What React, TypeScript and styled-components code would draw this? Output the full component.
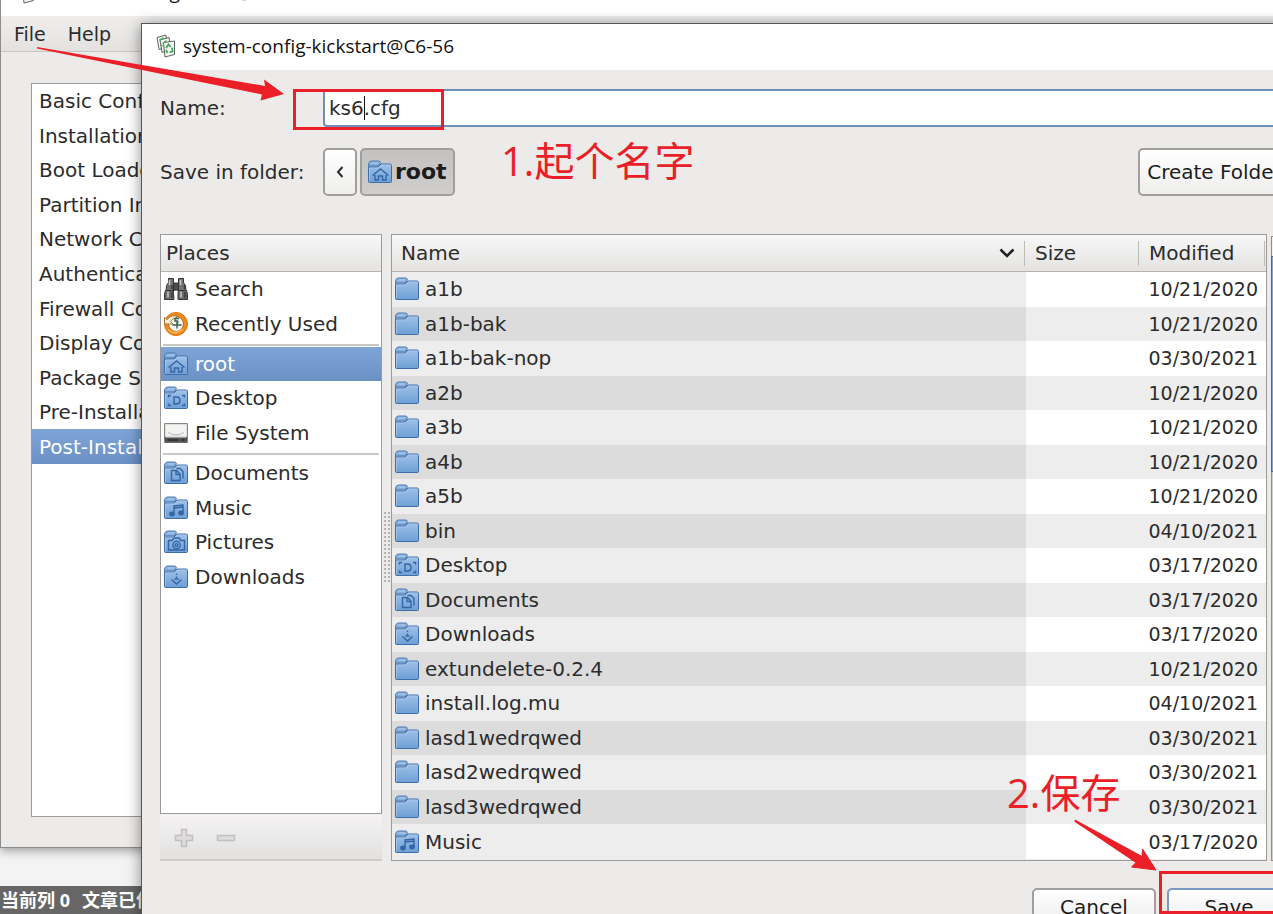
import React from "react";
import styled, { createGlobalStyle, css } from "styled-components";

const sans = `"DejaVu Sans", "Liberation Sans", sans-serif`;
const titleFont = `"Open Sans", "Noto Sans", sans-serif`;
const cjk = `"Noto Sans CJK SC", sans-serif`;
const red = "#ea1f27";
const line = "#9b9b99";
const blueRow = "linear-gradient(#7fa5d8, #6a90c4)";

const GlobalStyle = createGlobalStyle`
  *, *::before, *::after { box-sizing: border-box; }
  html, body { margin: 0; overflow: hidden; }
  body { font: 20px/24px ${sans}; color: #2c2c2c; background: #f3f3f3; }
  button, input { font: inherit; color: inherit; }
`;

const Desktop = styled.main`
  position: relative;
  display: flex;
  flex-direction: column;
  justify-content: flex-end;
  min-height: 100vh;
  overflow: hidden;
`;

const StatusBar = styled.footer`
  display: flex;
  gap: 12px;
  height: 28px;
  padding-left: 1px;
  background: #666;
  color: #fff;
  font: bold 18px/28px "Open Sans", ${cjk};
  white-space: nowrap;
`;

const AppWindow = styled.section<{ $x: number; $y: number }>`
  position: absolute;
  left: ${(p) => p.$x}px;
  top: ${(p) => p.$y}px;
  right: -37px;
  display: flex;
  flex-direction: column;
  background: #ecebea;
  border: 1px solid #8c8c8c;
`;

const MainWindow = styled(AppWindow)`
  box-shadow: 0 2px 10px rgba(0, 0, 0, 0.4);
`;

const Dialog = styled(AppWindow)`
  border-color: #555;
  box-shadow: 0 2px 14px rgba(0, 0, 0, 0.45);
`;

const TitleBar = styled.header`
  display: flex;
  align-items: center;
  gap: 7px;
  height: 46px;
  padding: 0 0 2px 14px;
  background: #fff;
  color: #111;
  font: 19px/24px ${titleFont};
  white-space: nowrap;
`;

const MenuBar = styled.nav`
  display: flex;
  gap: 22px;
  height: 36px;
  padding-left: 13px;
  background: linear-gradient(#efeeed, #e3e2e1);
  border-bottom: 1px solid #c6c5c4;
`;

const MenuButton = styled.button`
  padding: 0;
  border: 0;
  background: none;
  font-size: 19px;
`;

const MainBody = styled.div`
  padding: 31px 30px 30px;
`;

const SectionList = styled.div`
  height: 734px;
  border: 1px solid ${line};
  background: #fff;
`;

const ItemGroup = styled.ul<{ $height: number }>`
  display: grid;
  grid-auto-rows: 1fr;
  height: ${(p) => p.$height}px;
  margin: 0;
  padding: 0;
  list-style: none;
`;

const Item = styled.button<{ $selected?: boolean; $inset: number }>`
  display: flex;
  align-items: center;
  gap: 7px;
  width: 100%;
  height: 100%;
  padding: 0 0 0 ${(p) => p.$inset}px;
  border: 0;
  background: none;
  text-align: left;
  white-space: nowrap;
  ${(p) => p.$selected && css`
    background: ${blueRow};
    color: #fff;
  `}
`;

const Divider = styled.hr`
  height: 2px;
  margin: 3px 2px 1px;
  border: 0;
  background: #c8c8c8;
`;

const DialogBody = styled.form`
  display: flex;
  flex-direction: column;
  padding: 19px 18px;
`;

const FormRow = styled.div<{ $height: number; $after: number }>`
  display: flex;
  align-items: center;
  height: ${(p) => p.$height}px;
  margin-bottom: ${(p) => p.$after}px;
`;

const Caption = styled.label`
  flex: 0 0 163px;
  white-space: nowrap;
`;

const Field = styled.div`
  position: relative;
  flex: 1;
  height: 100%;
`;

const NameInput = styled.input`
  width: 100%;
  height: 100%;
  padding: 0 4px;
  border: 2px solid #6f8fb8;
  border-radius: 4px;
  background: #fff;
  outline: none;
`;

const Caret = styled.span`
  position: absolute;
  left: 41px;
  top: 7px;
  width: 1px;
  height: 24px;
  background: #111;
`;

const Button = styled.button<{ $pressed?: boolean; $focus?: boolean; $width?: number }>`
  display: flex;
  align-items: center;
  justify-content: center;
  gap: 3px;
  height: 48px;
  width: ${(p) => (p.$width ? `${p.$width}px` : "auto")};
  padding: 0 6px;
  border: 2px solid ${(p) => (p.$focus ? "#7c99c2" : "#a09f9d")};
  border-radius: 5px;
  background: ${(p) => (p.$pressed ? "linear-gradient(#c3c2c0, #cfcecc)" : "linear-gradient(#fff, #efeeed)")};
  font-weight: ${(p) => (p.$pressed ? "bold" : "normal")};
  font-size: ${(p) => (p.$pressed ? 22 : 20)}px;
  color: #1c1c1c;
  white-space: nowrap;
`;

const PathBar = styled.div`
  display: flex;
  flex: 1;
  gap: 3px;
`;

const Panes = styled.div`
  display: flex;
  height: 627px;
  margin-bottom: 27px;
`;

const PlacesPane = styled.div`
  display: flex;
  flex-direction: column;
  flex: 0 0 222px;
`;

const PlacesList = styled.div`
  flex: 1;
  border: 1px solid ${line};
  background: #fff;
`;

const PaneHeading = styled.h2`
  height: 37px;
  margin: 0;
  padding: 0 5px;
  border-bottom: 1px solid #b5b4b2;
  background: linear-gradient(#f8f8f8, #e4e3e2);
  font: inherit;
  line-height: 36px;
`;

const PlacesTools = styled.div`
  display: flex;
  gap: 20px;
  height: 47px;
  padding: 2px 0 0 13px;
  background: linear-gradient(#f4f2f3, #e2e1e0);
  border-bottom: 2px solid #cccbca;
`;

const ToolButton = styled.button`
  display: flex;
  align-items: center;
  padding: 0;
  border: 0;
  background: none;
`;

const Grip = styled.div`
  flex: 0 0 9px;
  height: 72px;
  margin-top: 277px;
  background: radial-gradient(circle at 3px 2px, #b4b3b1 1px, transparent 1px) 0 0 / 4px 4px;
`;

const FilesPane = styled.div`
  flex: 1;
  border: 1px solid ${line};
  background: #ededed;
`;

const FileTable = styled.table`
  width: 100%;
  height: 624px;
  border-spacing: 0;
  table-layout: fixed;
`;

const HeadCell = styled.th<{ $width?: number }>`
  position: relative;
  width: ${(p) => (p.$width ? `${p.$width}px` : "auto")};
  height: 37px;
  padding: 0 9px;
  border-bottom: 1px solid #b5b4b2;
  background: linear-gradient(#f8f8f8, #e4e3e2);
  font-weight: normal;
  text-align: left;

  &::after {
    content: "";
    position: absolute;
    top: 6px;
    right: 1px;
    width: 1px;
    height: 25px;
    background: #bdbcba;
  }
`;

const HeadLabel = styled.span`
  display: flex;
  align-items: center;
  justify-content: space-between;
`;

const FileRow = styled.tr`
  background: #fff;
  td:first-child { background: #ededed; }
  &:nth-child(even) { background: #ededed; }
  &:nth-child(even) td:first-child { background: #dcdcdc; }
`;

const FileCell = styled.td<{ $right?: boolean }>`
  height: 34px;
  padding: 0 ${(p) => (p.$right ? 8 : 3)}px;
  font-size: ${(p) => (p.$right ? 19 : 20)}px;
  text-align: ${(p) => (p.$right ? "right" : "left")};
`;

const FileName = styled.span`
  display: flex;
  align-items: center;
  gap: 6px;
`;

const Scrollbar = styled.div`
  display: flex;
  flex-direction: column;
  flex: 0 0 20px;
  margin: 2px 0 0 4px;
  border: 1px solid #8f8e8c;
  background: #cfcecc;
`;

const Stepper = styled.div`
  height: 19px;
  background: #f2f1f0;
`;

const Thumb = styled.div`
  height: 216px;
  margin: 0 -1px;
  border: 1px solid #47699a;
  background: #7fa5d8;
`;

const Actions = styled.div`
  display: flex;
  justify-content: flex-end;
  gap: 11px;

  ${Button} { height: 38px; }
`;

const RedBox = styled.div<{ $x: number; $y: number; $w: number; $h: number }>`
  position: absolute;
  left: ${(p) => p.$x}px;
  top: ${(p) => p.$y}px;
  width: ${(p) => p.$w}px;
  height: ${(p) => p.$h}px;
  border: 3px solid ${red};
  pointer-events: none;
`;

const Note = styled.p<{ $x: number; $y: number }>`
  position: absolute;
  left: ${(p) => p.$x}px;
  top: ${(p) => p.$y}px;
  margin: 0;
  color: ${red};
  font: 40px/48px "Open Sans", "Noto Sans", ${cjk};
  white-space: nowrap;
  pointer-events: none;
`;

const Arrows = styled.svg`
  position: absolute;
  left: 0;
  top: 0;
  pointer-events: none;
`;

const Drawing = styled.svg`
  flex: none;
  display: block;
`;

type Kind = "plain" | "home" | "desktop" | "documents" | "music" | "pictures" | "downloads";

const emblems: Record<Kind, React.ReactNode> = {
  plain: null,
  home: <path d="M4.500 15.500l8-6.500 8 6.500M7 15v5h3.500v-4h4v4H18v-5" />,
  desktop: (
    <>
      <path d="M10 11h2.500q3.500 0 3.500 3.500T12.500 18H10z" />
      <path d="M4.500 11.500V9.500H7M18 9.500h2.500v2M4.500 17.500v2H7M18 19.500h2.500v-2" />
    </>
  ),
  documents: <path d="M7.500 9.500h5l3.500 3.500v6.500H7.500zM12 9.500v4h4M12.500 7.500h3.500l3 3v7" />,
  music: (
    <>
      <path d="M10 17.500v-7.500l9-1v7.500M10 12l9-1" />
      <ellipse cx="8" cy="18" rx="2.200" ry="1.700" fill="#3465a4" />
      <ellipse cx="17" cy="17" rx="2.200" ry="1.700" fill="#3465a4" />
    </>
  ),
  pictures: (
    <>
      <path d="M4.500 10.500h3.500l2-2.500h5l2 2.500h3.500v9.500H4.500z" />
      <circle cx="12.500" cy="15" r="3.700" />
      <circle cx="12.500" cy="15" r="1.400" />
    </>
  ),
  downloads: <path d="M7.500 14.500l5 4.500 5-4.500M12.500 8.500v1.500M12.500 11.500v1.500M10.500 14h4" />,
};

const FolderIcon = ({ kind = "plain" }: { kind?: Kind }) => (
  <Drawing width="24" height="24" viewBox="0 0 24 24" aria-hidden="true">
    <defs>
      <linearGradient id="folder" x1="0" y1="0" x2="0" y2="1">
        <stop offset="0" stopColor="#9fc1e8" />
        <stop offset="1" stopColor="#6d9fd6" />
      </linearGradient>
    </defs>
    <path d="M.5 20.500V3.500q1-2.500 3-2.500h7q1.500 0 2 1.500l-2 3.500H.5z" fill="#86aedb" stroke="#4c7ab3" />
    <path d="M3.500 3h6.500" stroke="#b7d1ee" />
    <path d="M.5 8.500q0-1.500 1.500-1.500h8l3-3H22q1.500 0 1.500 1.500v16q0 1-1 1h-21q-1 0-1-1z" fill="url(#folder)" stroke="#3f6da8" />
    <path d="M1.500 21V8h9l3-3h9" fill="none" stroke="#b5d0ef" strokeOpacity=".6" />
    <g fill="none" stroke="#3465a4" strokeWidth="1.400">{emblems[kind]}</g>
  </Drawing>
);

const SearchIcon = () => (
  <Drawing width="24" height="24" viewBox="0 0 24 24" aria-hidden="true">
    <g stroke="#343634">
      <path d="M4.500 1.500h5v4l1 3v5H2l.5-5 2-3zM14.500 1.500h5v4l2 3 .5 5h-8.500v-5l1-3z" fill="#70736f" />
      <path d="M9.500 6h5v7h-5z" fill="#4a4d4a" />
      <path d="M1.500 13.500h8v3l.5 6H.5v-6zM14.500 13.500h8l1 3v6H14v-6z" fill="#666966" />
    </g>
    <path d="M5.500 3v5M4 14.500v6M16.500 3v5M17 14.500v6" stroke="#c9cbc8" strokeWidth="1.500" />
    <path d="M8 8v4M8 15v6M20.500 8v4M21 15v6" stroke="#3a3c3a" strokeWidth="1.500" />
  </Drawing>
);

const RecentIcon = () => (
  <Drawing width="24" height="24" viewBox="0 0 24 24" aria-hidden="true">
    <circle cx="12" cy="12" r="11.500" fill="#f08a1d" stroke="#d47310" />
    <circle cx="12" cy="12" r="7.500" fill="#f3f3ef" stroke="#b96a15" />
    <path d="M.5 12V5.500l2.500 2q3.500-4.500 9-4l.5 2.500q-4 0-6 3.500l2.500 2.500z" fill="#f7ead0" stroke="#9d7434" strokeWidth=".9" />
    <path d="M15 6.500h-4v2.500h2.500q1 1.500-.5 3M8.500 13h9M13 10v6.500" fill="none" stroke="#3b5f58" strokeWidth="1.400" />
    <path d="M4 17.500q7 6.500 15-.5" fill="none" stroke="#ffb65b" strokeWidth="1.500" />
  </Drawing>
);

const DriveIcon = () => (
  <Drawing width="24" height="24" viewBox="0 0 24 24" aria-hidden="true">
    <path d="M.5 2.500h23v19H.5z" fill="#dededd" stroke="#858784" />
    <path d="M2 4h20v10.500H2z" fill="#f3f3f2" />
    <path d="M4 11.500q8 4.500 16 0" fill="none" stroke="#b9bab8" />
    <path d="M1 16h22v5.500H1z" fill="#50524f" />
    <path d="M2 16.500h20" stroke="#9a9c99" />
    <path d="M4 19h10M18 19h2" stroke="#2e302e" strokeWidth="1.500" />
  </Drawing>
);

const AppIcon = () => (
  <Drawing width="20" height="24" viewBox="0 0 20 24" aria-hidden="true">
    <g fill="#f5f8f5" stroke="#4b544c" strokeWidth=".9">
      <path d="M1 3.500l9-2.500 2 12-9 2.500z" />
      <path d="M4 6l9-2.500 2 12-9 3z" />
      <path d="M7.500 8.500L18.500 7v13.500L9 23z" />
    </g>
    <path d="M3.500 6l4-2M6.500 9.500l4-3M4.500 11l2 1" stroke="#4fae63" strokeWidth="1.500" />
    <path d="M10 14l2.500-3.500 2 2.500M16 13.500l.5 4-3 .500M11.500 19l-1.500-3" fill="none" stroke="#3aa556" strokeWidth="1.700" />
  </Drawing>
);

const SortIcon = () => (
  <Drawing width="18" height="12" viewBox="0 0 18 12" aria-hidden="true">
    <path d="M1.500 2.500L8 9l6.500-6.500" fill="none" stroke="#222" strokeWidth="2.500" />
  </Drawing>
);

const BackIcon = () => (
  <Drawing width="8" height="12" viewBox="0 0 8 12" aria-hidden="true">
    <path d="M6.500 1L2 6l4.500 5" fill="none" stroke="#2c2c2c" strokeWidth="2" />
  </Drawing>
);

const PlusIcon = () => (
  <Drawing width="22" height="22" viewBox="0 0 22 22" aria-hidden="true">
    <path d="M8.500 2.500h5v6h6v5h-6v6h-5v-6h-6v-5h6z" fill="#dddcdb" stroke="#c2c0bf" strokeWidth="1.500" />
  </Drawing>
);

const MinusIcon = () => (
  <Drawing width="22" height="22" viewBox="0 0 22 22" aria-hidden="true">
    <path d="M2.500 8.500h17v5h-17z" fill="#dddcdb" stroke="#c2c0bf" strokeWidth="1.500" />
  </Drawing>
);

const sections = [
  "Basic Configuration",
  "Installation Method",
  "Boot Loader Options",
  "Partition Information",
  "Network Configuration",
  "Authentication",
  "Firewall Configuration",
  "Display Configuration",
  "Package Selection",
  "Pre-Installation Script",
  "Post-Installation Script",
];

interface Place {
  name: string;
  icon: React.ReactNode;
}

const placeGroups: { height: number; places: Place[] }[] = [
  {
    height: 69,
    places: [
      { name: "Search", icon: <SearchIcon /> },
      { name: "Recently Used", icon: <RecentIcon /> },
    ],
  },
  {
    height: 103,
    places: [
      { name: "root", icon: <FolderIcon kind="home" /> },
      { name: "Desktop", icon: <FolderIcon kind="desktop" /> },
      { name: "File System", icon: <DriveIcon /> },
    ],
  },
  {
    height: 138,
    places: [
      { name: "Documents", icon: <FolderIcon kind="documents" /> },
      { name: "Music", icon: <FolderIcon kind="music" /> },
      { name: "Pictures", icon: <FolderIcon kind="pictures" /> },
      { name: "Downloads", icon: <FolderIcon kind="downloads" /> },
    ],
  },
];

const files: [string, string, Kind?][] = [
  ["a1b", "10/21/2020"],
  ["a1b-bak", "10/21/2020"],
  ["a1b-bak-nop", "03/30/2021"],
  ["a2b", "10/21/2020"],
  ["a3b", "10/21/2020"],
  ["a4b", "10/21/2020"],
  ["a5b", "10/21/2020"],
  ["bin", "04/10/2021"],
  ["Desktop", "03/17/2020", "desktop"],
  ["Documents", "03/17/2020", "documents"],
  ["Downloads", "03/17/2020", "downloads"],
  ["extundelete-0.2.4", "10/21/2020"],
  ["install.log.mu", "04/10/2021"],
  ["lasd1wedrqwed", "03/30/2021"],
  ["lasd2wedrqwed", "03/30/2021"],
  ["lasd3wedrqwed", "03/30/2021"],
  ["Music", "03/17/2020", "music"],
];

export default function App() {
  return (
    <Desktop>
      <GlobalStyle />
      <StatusBar>
        <span>当前列 0</span>
        <span>文章已保存</span>
      </StatusBar>

      <MainWindow $x={0} $y={-31}>
        <TitleBar>
          <AppIcon />
          Kickstart Configurator@C6-56
        </TitleBar>
        <MenuBar>
          <MenuButton type="button">File</MenuButton>
          <MenuButton type="button">Help</MenuButton>
        </MenuBar>
        <MainBody>
          <SectionList>
            <ItemGroup $height={380}>
              {sections.map((name, i) => (
                <li key={name}>
                  <Item type="button" $inset={7} $selected={i === sections.length - 1}>{name}</Item>
                </li>
              ))}
            </ItemGroup>
          </SectionList>
        </MainBody>
      </MainWindow>

      <Dialog $x={141} $y={23} role="dialog" aria-labelledby="dialog-title">
        <TitleBar id="dialog-title">
          <AppIcon />
          system-config-kickstart@C6-56
        </TitleBar>
        <DialogBody onSubmit={(e) => e.preventDefault()}>
          <FormRow $height={38} $after={21}>
            <Caption htmlFor="file-name">Name:</Caption>
            <Field>
              <NameInput id="file-name" type="text" defaultValue="ks6.cfg" />
              <Caret />
            </Field>
          </FormRow>
          <FormRow $height={48} $after={38}>
            <Caption as="span">Save in folder:</Caption>
            <PathBar>
              <Button type="button" $width={34} aria-label="Back"><BackIcon /></Button>
              <Button type="button" $pressed><FolderIcon kind="home" />root</Button>
            </PathBar>
            <Button type="button" $width={153}>Create Folder</Button>
          </FormRow>

          <Panes>
            <PlacesPane>
              <PlacesList>
                <PaneHeading>Places</PaneHeading>
                {placeGroups.map((group, g) => (
                  <React.Fragment key={group.places[0].name}>
                    {g > 0 && <Divider />}
                    <ItemGroup $height={group.height}>
                      {group.places.map((place) => (
                        <li key={place.name}>
                          <Item type="button" $inset={3} $selected={place.name === "root"}>
                            {place.icon}
                            {place.name}
                          </Item>
                        </li>
                      ))}
                    </ItemGroup>
                  </React.Fragment>
                ))}
              </PlacesList>
              <PlacesTools>
                <ToolButton type="button" aria-label="Add"><PlusIcon /></ToolButton>
                <ToolButton type="button" aria-label="Remove"><MinusIcon /></ToolButton>
              </PlacesTools>
            </PlacesPane>
            <Grip />
            <FilesPane>
              <FileTable>
                <thead>
                  <tr>
                    <HeadCell><HeadLabel>Name<SortIcon /></HeadLabel></HeadCell>
                    <HeadCell $width={114}>Size</HeadCell>
                    <HeadCell $width={126}>Modified</HeadCell>
                  </tr>
                </thead>
                <tbody>
                  {files.map(([name, date, kind]) => (
                    <FileRow key={name}>
                      <FileCell><FileName><FolderIcon kind={kind} />{name}</FileName></FileCell>
                      <FileCell />
                      <FileCell $right>{date}</FileCell>
                    </FileRow>
                  ))}
                </tbody>
              </FileTable>
            </FilesPane>
            <Scrollbar>
              <Stepper />
              <Thumb />
            </Scrollbar>
          </Panes>

          <Actions>
            <Button type="button" $width={124}>Cancel</Button>
            <Button type="submit" $width={124} $focus>Save</Button>
          </Actions>
        </DialogBody>
      </Dialog>

      <RedBox $x={293} $y={89} $w={151} $h={41} />
      <RedBox $x={1159} $y={871} $w={150} $h={43} />
      <Note $x={501} $y={137}>1.起个名字</Note>
      <Note $x={1007} $y={769}>2.保存</Note>
      <Arrows width="1200" height="900" viewBox="0 0 1200 900" aria-hidden="true">
        <path d="M37 47L265 86 264 79.500 284 94 260.500 100.500 262 94.500 37 48.500z" fill={red} />
        <path d="M1075 820L1142 856.500 1142.500 849 1156 870 1131.500 867 1136 862.500 1075 821.500z" fill={red} stroke={red} />
      </Arrows>
    </Desktop>
  );
}
